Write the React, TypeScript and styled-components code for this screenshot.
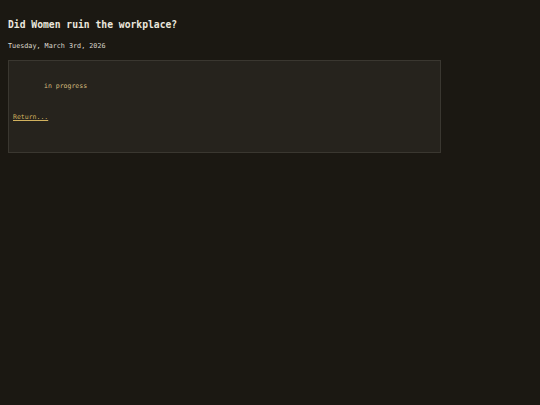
import styled, { createGlobalStyle } from "styled-components";

const GlobalStyle = createGlobalStyle`
  html, body {
    margin: 0;
    padding: 0;
    background-color: #1b1812;
  }
  body {
    font-family: "DejaVu Sans Mono", "Liberation Mono", monospace;
    color: #e6e2d8;
  }
`;

const Page = styled.div`
  padding: 8px;
  width: 433px;
`;

const Title = styled.h1`
  font-size: 9.7px;
  font-weight: bold;
  line-height: 12px;
  margin: 11px 0 0 0;
  color: #ebe7de;
`;

const DateLine = styled.div`
  font-size: 6.75px;
  line-height: 8px;
  margin-top: 11px;
  color: #dcd8cf;
`;

const Panel = styled.div`
  margin-top: 10px;
  height: 91px;
  background-color: #26231d;
  border: 1px solid #3a3730;
  padding: 0 4px;
  box-sizing: content-box;
  font-size: 6.5px;
  line-height: 8px;
`;

const Status = styled.div`
  padding-left: 31px;
  margin-top: 21px;
  color: #d4bb7e;
`;

const ReturnLink = styled.a`
  display: inline-block;
  margin-top: 23px;
  color: #d2b25e;
  text-decoration: underline;
  cursor: pointer;
`;

const App = () => {
  return (
    <>
      <GlobalStyle />
      <Page>
        <Title>Did Women ruin the workplace?</Title>
        <DateLine>Tuesday, March 3rd, 2026</DateLine>
        <Panel>
          <Status>in progress</Status>
          <ReturnLink href="#">Return...</ReturnLink>
        </Panel>
      </Page>
    </>
  );
};

export default App;
